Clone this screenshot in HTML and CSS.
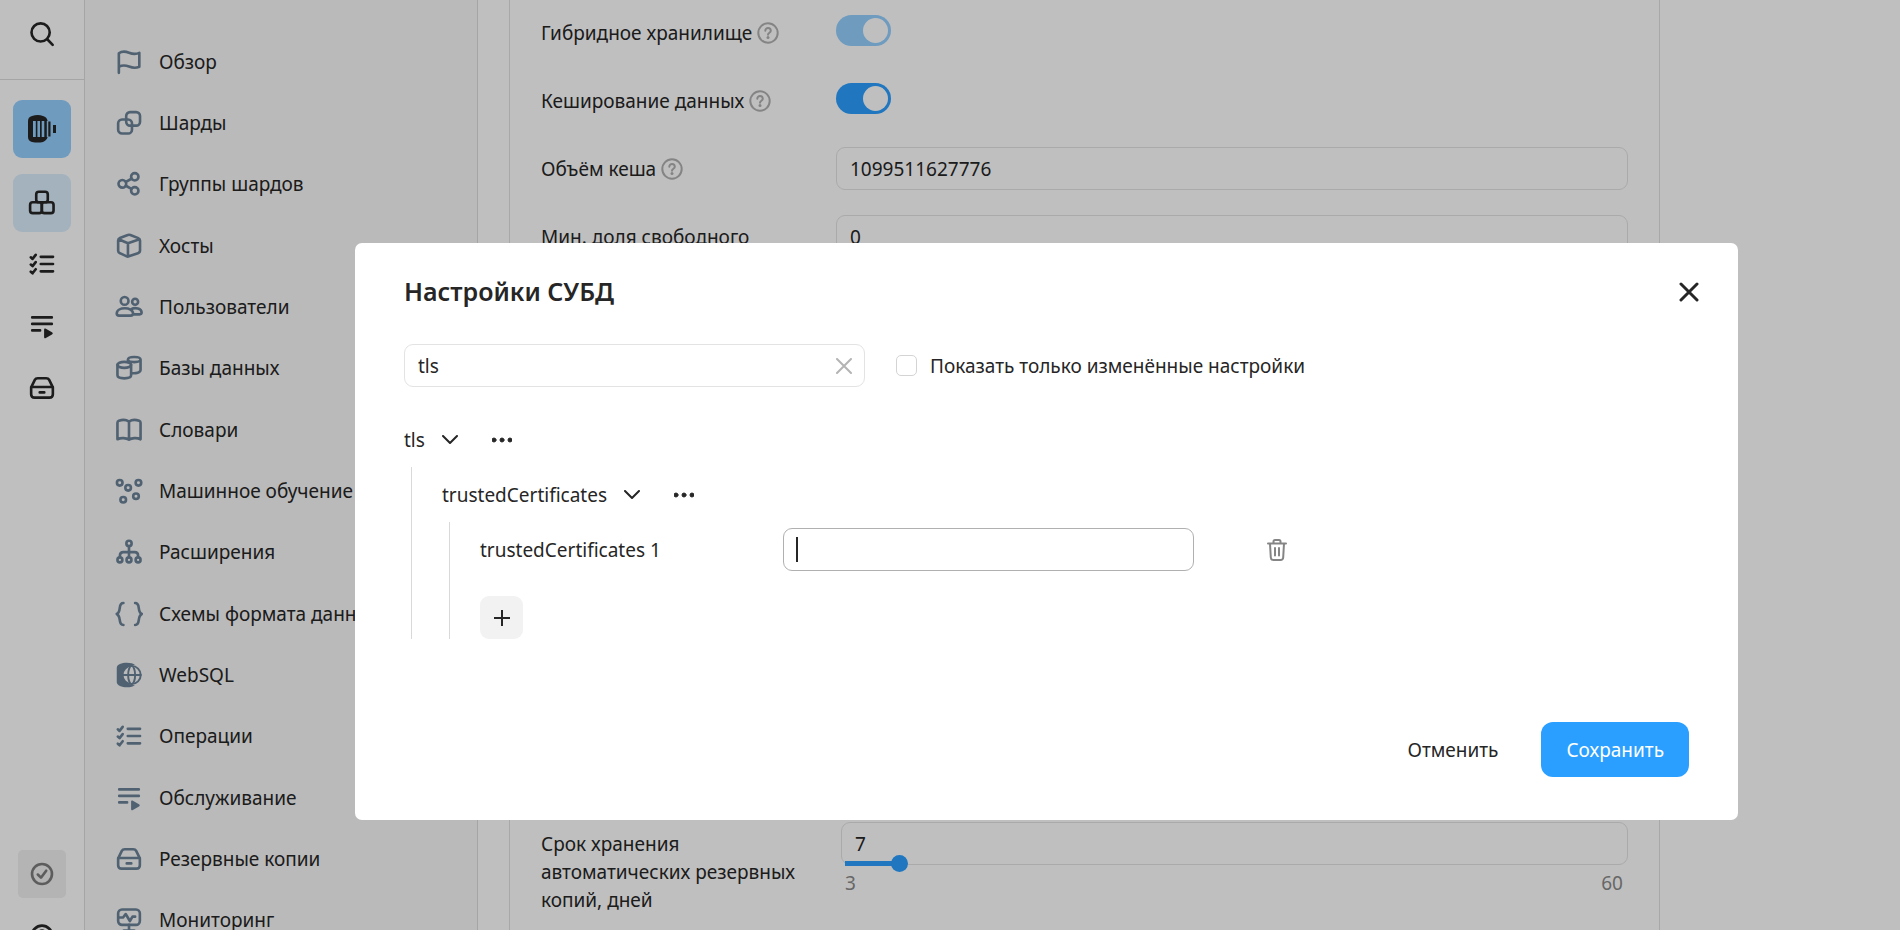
FILE: index.html
```html
<!DOCTYPE html>
<html lang="ru">
<head>
<meta charset="utf-8">
<meta name="viewport" content="width=device-width, initial-scale=1">
<title>Настройки СУБД</title>
<link rel="stylesheet" href="styles.css">
</head>
<body>
<svg class="sprite" aria-hidden="true">
  <symbol id="i-checks" viewBox="0 0 16 16"><path d="M1.6 4.2l1 .9 1.8-2.3M1.6 8.3l1 .9 1.8-2.3M1.6 12.4l1 .9 1.8-2.3M7.3 3.9h7M7.3 8h7M7.3 12.2h7"/></symbol>
  <symbol id="i-listplay" viewBox="0 0 16 16"><path d="M2.4 3.1h11.2M2.4 6.8h11.2M2.4 10.5h4.5"/><path class="solid" d="M9.2 10.1v4.2c0 .7.5.9 1 .6l3.5-2c.6-.4.6-.9 0-1.3l-3.5-2.1c-.5-.3-1-.1-1 .6z"/></symbol>
  <symbol id="i-archive" viewBox="0 0 16 16"><path d="M1.8 7.6 3.9 3.4C4.3 2.6 4.9 2.4 5.6 2.4h4.8c.7 0 1.3.2 1.7 1l2.1 4.2v3.9c0 1.2-.8 2-2 2H3.8c-1.2 0-2-.8-2-2zM1.8 7.4h12.4M6.7 10.5h2.6"/></symbol>
</svg>

<div class="app">
  <aside class="rail" aria-label="Сервисы">
    <div class="rail-top">
      <button class="rail-btn" type="button" aria-label="Поиск"><svg class="icon" viewBox="0 0 16 16"><circle cx="7.2" cy="7.1" r="5.2"/><path d="m11 11 3.1 3.2"/></svg></button>
    </div>
    <div class="rail-list">
      <a class="rail-tile rail-tile-main" href="#" aria-label="ClickHouse"><svg class="brand" viewBox="0 0 28 28"><path d="M0 6Q0 2 4 1Q10-1 15 1Q19 2 19.600 6H5v16h14.600Q19 25 15 27Q10 28 4 27Q0 26 0 22z"/><path d="M7.800 5h1.600v18H7.800zM12 5h1.700v18H12zM16.300 4h2.500v20h-2.500zM20.300 6.500h2.200v15h-2.200zM25 10h3v8h-3z"/></svg></a>
      <a class="rail-tile rail-tile-active" href="#" aria-label="Кластеры"><svg class="icon" viewBox="0 0 16 16"><rect x="4.700" y="1.600" width="6.600" height="6" rx="1.500"/><rect x="1.200" y="7.600" width="6.700" height="6.200" rx="1.500"/><rect x="7.900" y="7.600" width="6.700" height="6.200" rx="1.500"/></svg></a>
      <a class="rail-link" href="#" aria-label="Операции"><svg class="icon"><use href="#i-checks"/></svg></a>
      <a class="rail-link" href="#" aria-label="Обслуживание"><svg class="icon"><use href="#i-listplay"/></svg></a>
      <a class="rail-link" href="#" aria-label="Резервные копии"><svg class="icon"><use href="#i-archive"/></svg></a>
    </div>
    <div class="rail-bottom">
      <button class="rail-status" type="button" aria-label="Статус"><svg class="icon" viewBox="0 0 16 16"><circle cx="8" cy="8" r="5.700"/><path d="m5.600 8.300 1.800 1.800 3-4"/></svg></button>
      <button class="rail-btn" type="button" aria-label="Справка"><svg class="icon" viewBox="0 0 16 16"><circle cx="8" cy="8" r="5.900"/><path d="M6.400 6.500c0-2.200 3.300-2.200 3.300 0 0 1.200-1.700 1.200-1.700 2.400M8 11v.2"/></svg></button>
    </div>
  </aside>

  <nav class="nav" aria-label="Разделы кластера">
    <a class="nav-link" href="#"><svg class="icon" viewBox="0 0 16 16"><path d="M2.200 14.200V3c2.200-1.600 4.300-.9 5.800-.3s3.700 1.100 5.900.1v7.900c-2.200 1-4.400.5-5.900-.1s-3.600-1-5.800.1"/></svg>Обзор</a>
    <a class="nav-link" href="#"><svg class="icon" viewBox="0 0 16 16"><rect x="6.400" y="1.800" width="7.900" height="7.700" rx="2.200"/><rect x="1.800" y="6" width="7.900" height="8" rx="2.200"/></svg>Шарды</a>
    <a class="nav-link" href="#"><svg class="icon" viewBox="0 0 16 16"><circle cx="4.200" cy="7.900" r="2.200"/><circle cx="11.300" cy="3.900" r="2.100"/><circle cx="11.300" cy="11.900" r="2.100"/><path d="m6.200 6.800 3.200-1.800M6.200 9l3.200 1.800"/></svg>Группы шардов</a>
    <a class="nav-link" href="#"><svg class="icon" viewBox="0 0 16 16"><path d="M7.300 1.700 2.800 3.400q-1 .4-1 1.400v5.900q0 1 1 1.400l3.900 1.800q.6.300 1.200 0l5.200-1.800q1.200-.4 1.200-1.500V4.900q0-1-1-1.400L8.800 1.700q-.8-.3-1.500 0zM2.100 4.100l5.300 2.300 6.600-2.300M7.400 6.400v7.400"/></svg>Хосты</a>
    <a class="nav-link" href="#"><svg class="icon" viewBox="0 0 16 16"><circle cx="5.500" cy="4.500" r="2.200"/><circle cx="11.500" cy="5" r="1.700"/><path d="M1 11.700c0-4 9.300-4 9.300 0 0 .8-.5 1.200-1.300 1.200H2.300c-.8 0-1.300-.4-1.300-1.200zM9.300 9.200c2.300-1.200 5.900-.2 5.900 2 0 .6-.4 1-1.100 1h-3.600"/></svg>Пользователи</a>
    <a class="nav-link" href="#"><svg class="icon" viewBox="0 0 16 16"><ellipse cx="5.300" cy="6.200" rx="3.900" ry="1.700"/><path d="M1.400 6.200v6c0 2.300 7.800 2.300 7.800 0v-6M7.400 4.300V3.200c0-2 7.200-2 7.200 0v6c0 1.400-2.600 2-5.100 1.700M7.400 3.200c0 1.900 7.200 1.900 7.200 0"/></svg>Базы данных</a>
    <a class="nav-link" href="#"><svg class="icon" viewBox="0 0 16 16"><path d="M8 3.200C6.600 2.200 4 2.100 2.200 2.700q-.8.300-.8 1.100v9.500c2-1 5-.8 6.600.2 1.600-1 4.600-1.200 6.600-.2V3.800q0-.8-.8-1.100C12 2.100 9.400 2.200 8 3.200zv10"/></svg>Словари</a>
    <a class="nav-link" href="#"><svg class="icon" viewBox="0 0 16 16"><circle cx="2.700" cy="3.300" r="1.600"/><circle cx="13.400" cy="3.300" r="1.600"/><circle cx="7.500" cy="6.200" r="1.600"/><circle cx="12" cy="11" r="1.600"/><circle cx="4.700" cy="13" r="1.600"/></svg>Машинное обучение</a>
    <a class="nav-link" href="#"><svg class="icon" viewBox="0 0 16 16"><circle cx="8" cy="3.100" r="1.500"/><circle cx="2.800" cy="12.500" r="1.400"/><circle cx="8" cy="12.500" r="1.400"/><circle cx="13.200" cy="12.500" r="1.400"/><path d="M8 4.600V11M2.800 11v-.9q0-2 2-2h6.400q2 0 2 2v.9"/></svg>Расширения</a>
    <a class="nav-link" href="#"><svg class="icon" viewBox="0 0 16 16"><path d="M4.800 1.700c-3.400 0-.8 4.700-3.800 6.300 3 1.600.4 6.300 3.800 6.300M11.500 1.700c3.400 0 .8 4.700 3.800 6.300-3 1.600-.4 6.300-3.800 6.300"/></svg>Схемы формата данных</a>
    <a class="nav-link" href="#"><svg class="icon" viewBox="0 0 16 16"><path class="solid" d="M1 4C1 .4 9.700.4 11.400 2.300 7 2.400 4.200 5 4.200 8s2.800 5.700 7.200 5.800C9.700 15.600 1 15.600 1 12z"/><g class="thin"><circle cx="9.500" cy="8" r="5.200"/><ellipse cx="9.500" cy="8" rx="2" ry="5.200"/><path d="M4.300 8h10.400"/></g></svg>WebSQL</a>
    <a class="nav-link" href="#"><svg class="icon"><use href="#i-checks"/></svg>Операции</a>
    <a class="nav-link" href="#"><svg class="icon"><use href="#i-listplay"/></svg>Обслуживание</a>
    <a class="nav-link" href="#"><svg class="icon"><use href="#i-archive"/></svg>Резервные копии</a>
    <a class="nav-link" href="#"><svg class="icon" viewBox="0 0 16 16"><rect x="1.800" y="2" width="12.400" height="8.800" rx="2.200"/><path d="M2 6.600h2.600l1.500-2 2.400 4 1.500-2.500h1.500M8 10.800V14M5 14h6"/></svg>Мониторинг</a>
  </nav>

  <main class="main">
    <div class="card">
      <section class="settings">
        <div class="row">
          <label class="row-label" for="hybrid">Гибридное хранилище <svg class="help" viewBox="0 0 22 22"><circle cx="11" cy="11" r="9.700"/><path d="M8.300 8.800c0-3.800 5.500-3.600 5.500 0 0 2-2.800 2-2.800 4"/><circle class="dot" cx="11" cy="15.500" r="1.500"/></svg></label>
          <input class="switch" id="hybrid" type="checkbox" role="switch" checked disabled>
        </div>
        <div class="row">
          <label class="row-label" for="cache">Кеширование данных <svg class="help" viewBox="0 0 22 22"><circle cx="11" cy="11" r="9.700"/><path d="M8.300 8.800c0-3.800 5.500-3.600 5.500 0 0 2-2.800 2-2.800 4"/><circle class="dot" cx="11" cy="15.500" r="1.500"/></svg></label>
          <input class="switch" id="cache" type="checkbox" role="switch" checked>
        </div>
        <div class="row">
          <label class="row-label" for="cache-size">Объём кеша <svg class="help" viewBox="0 0 22 22"><circle cx="11" cy="11" r="9.700"/><path d="M8.300 8.800c0-3.800 5.500-3.600 5.500 0 0 2-2.800 2-2.800 4"/><circle class="dot" cx="11" cy="15.500" r="1.500"/></svg></label>
          <input class="field" id="cache-size" type="text" value="1099511627776">
        </div>
        <div class="row">
          <label class="row-label" for="free-share">Мин. доля свободного</label>
          <input class="field" id="free-share" type="text" value="0">
        </div>
      </section>
      <section class="backups">
        <div class="row">
          <label class="row-label" for="keep-days">Срок хранения автоматических резервных копий, дней</label>
          <div class="slider">
            <input class="field" id="keep-days" type="text" value="7">
            <input class="range" type="range" min="3" max="60" value="7" aria-label="Срок хранения, дней">
            <div class="range-ends"><span>3</span><span>60</span></div>
          </div>
        </div>
      </section>
    </div>
  </main>
</div>

<div class="overlay">
  <div class="modal" role="dialog" aria-modal="true" aria-labelledby="modal-title">
    <header class="modal-head">
      <h1 class="modal-title" id="modal-title">Настройки СУБД</h1>
      <button class="close" type="button" aria-label="Закрыть"><svg viewBox="0 0 20 20"><path d="m2 2 16 16M18 2 2 18"/></svg></button>
    </header>
    <div class="filters">
      <div class="search">
        <input class="field" type="text" value="tls" aria-label="Поиск настройки">
        <button class="clear" type="button" aria-label="Очистить"><svg viewBox="0 0 16 16"><path d="m1 1 14 14M15 1 1 15"/></svg></button>
      </div>
      <label class="check"><input type="checkbox">Показать только изменённые настройки</label>
    </div>
    <div class="tree">
      <div class="tree-row">
        <button class="expander" type="button" aria-expanded="true">tls<svg viewBox="0 0 16 10"><path d="m1 1 7 7 7-7"/></svg></button>
        <button class="more" type="button" aria-label="Действия с tls"><svg viewBox="0 0 20 6"><circle cx="2" cy="3" r="2"/><circle cx="10" cy="3" r="2"/><circle cx="18" cy="3" r="2"/></svg></button>
      </div>
      <div class="branch">
        <div class="tree-row">
          <button class="expander" type="button" aria-expanded="true">trustedCertificates<svg viewBox="0 0 16 10"><path d="m1 1 7 7 7-7"/></svg></button>
          <button class="more" type="button" aria-label="Действия с trustedCertificates"><svg viewBox="0 0 20 6"><circle cx="2" cy="3" r="2"/><circle cx="10" cy="3" r="2"/><circle cx="18" cy="3" r="2"/></svg></button>
        </div>
        <div class="branch">
          <div class="tree-row">
            <label class="leaf-label" for="cert-1">trustedCertificates 1</label>
            <div class="leaf-field"><input class="field field-focus" id="cert-1" type="text"><span class="caret"></span></div>
            <button class="trash" type="button" aria-label="Удалить"><svg viewBox="0 0 20 24"><path d="M1 5.500h18M6.500 5V3.500Q6.500 2 8 2h4q1.500 0 1.500 1.500V5M3 5.500l.8 14q.2 2.500 2.700 2.500h7q2.500 0 2.700-2.500l.8-14M8 10v7.500M12 10v7.500"/></svg></button>
          </div>
          <button class="add" type="button" aria-label="Добавить"><svg viewBox="0 0 16 16"><path d="M8 0v16M0 8h16"/></svg></button>
        </div>
      </div>
    </div>
    <footer class="modal-foot">
      <button class="btn btn-flat" type="button">Отменить</button>
      <button class="btn btn-action" type="button">Сохранить</button>
    </footer>
  </div>
</div>
</body>
</html>
```
FILE: styles.css
```css
* {
  box-sizing: border-box;
}

:root {
  --text: #262626;
  --line: #e3e3e3;
  --blue: #2b9fff;
}

body {
  margin: 0;
  height: 100vh;
  overflow: hidden;
  background: #fff;
  color: var(--text);
  font: 19px/28px "Noto Sans", "Open Sans", sans-serif;
}

button,
input {
  margin: 0;
  color: inherit;
  font: inherit;
}

button {
  padding: 0;
  border: 0;
  background: none;
}

a {
  color: inherit;
  text-decoration: none;
}

svg {
  display: block;
  flex: none;
  fill: none;
  stroke: currentColor;
  stroke-width: 2;
  stroke-linecap: round;
  stroke-linejoin: round;
}

.sprite {
  position: absolute;
  width: 0;
  height: 0;
}

.icon {
  width: 28px;
  height: 28px;
  stroke-width: 1.5;
}

.solid {
  fill: currentColor;
  stroke: none;
}

.thin {
  stroke-width: 1.1;
}

.app {
  display: flex;
  height: 100vh;
}

/* service rail */
.rail {
  display: flex;
  flex: none;
  flex-direction: column;
  width: 85px;
  border-right: 1px solid #dcdcdc;
}

.rail-top {
  display: flex;
  justify-content: center;
  height: 80px;
  padding-top: 20px;
  border-bottom: 1px solid #dcdcdc;
}

.rail-btn {
  height: 28px;
}

.rail-list {
  display: flex;
  flex-direction: column;
  align-items: center;
  padding-top: 20px;
}

.rail-tile,
.rail-link {
  display: flex;
  align-items: center;
  justify-content: center;
  width: 58px;
  height: 58px;
  border-radius: 9px;
}

.rail-link {
  height: 62px;
}

.rail-tile-main {
  margin-bottom: 16px;
  background: #95cfff;
}

.rail-tile-active {
  margin-bottom: 1px;
  background: #dbeefc;
}

.brand {
  width: 28px;
  height: 28px;
  fill: currentColor;
  stroke: none;
}

.rail-bottom {
  display: flex;
  flex-direction: column;
  align-items: center;
  gap: 24px;
  margin-top: auto;
  margin-bottom: -20px;
}

.rail-status {
  display: flex;
  align-items: center;
  justify-content: center;
  width: 48px;
  height: 48px;
  border-radius: 5px;
  background: #f0f0f0;
  color: #7c7c7c;
}

/* cluster navigation */
.nav {
  display: grid;
  flex: none;
  grid-auto-rows: 61px 61px 62px;
  width: 393px;
  padding-top: 31px;
  overflow: hidden;
  border-right: 1px solid #dcdcdc;
  background: #f8f8f8;
}

.nav-link {
  display: flex;
  align-items: center;
  gap: 16px;
  padding-left: 30px;
  white-space: nowrap;
}

.nav-link .icon {
  color: #6b8298;
}

/* settings form */
.main {
  flex: 1;
  padding: 0 31px;
}

.card {
  max-width: 1151px;
  height: 100%;
  padding: 11px 31px 0;
  overflow: hidden;
  border: solid #e1e1e1;
  border-width: 0 1px;
}

.settings {
  display: flex;
  flex-direction: column;
  gap: 25px;
  min-height: 811px;
}

.row {
  display: grid;
  grid-template-columns: 270px 1fr;
  gap: 25px;
  align-items: start;
}

.row-label {
  padding: 8px 0 7px;
}

.help {
  display: inline-block;
  width: 22px;
  height: 22px;
  color: #b1b1b1;
  vertical-align: -4px;
}

.dot {
  fill: currentColor;
  stroke: none;
}

.switch {
  display: flex;
  justify-content: flex-end;
  width: 55px;
  height: 31px;
  margin-top: 4px;
  padding: 3px;
  border-radius: 16px;
  background: var(--blue);
  appearance: none;
}

.switch::before {
  width: 25px;
  height: 25px;
  border-radius: 50%;
  background: #fff;
  content: "";
}

.switch:disabled {
  background: #95cfff;
}

.field {
  display: block;
  width: 100%;
  height: 43px;
  padding: 0 13px;
  border: 1px solid var(--line);
  border-radius: 9px;
  outline: 0;
  background: #fff;
}

.slider {
  position: relative;
  padding-left: 5px;
}

.range {
  position: absolute;
  top: 33px;
  left: 0;
  width: calc(100% + 3px);
  height: 17px;
  background: linear-gradient(var(--blue), var(--blue)) no-repeat 9px center / 7% 5px;
  appearance: none;
}

.range::-webkit-slider-thumb {
  width: 17px;
  height: 17px;
  border-radius: 50%;
  background: var(--blue);
  appearance: none;
}

.range-ends {
  display: flex;
  justify-content: space-between;
  padding: 4px 5px 0 4px;
  color: #8a8a8a;
}

/* dialog */
.overlay {
  position: fixed;
  inset: 0;
  display: flex;
  align-items: flex-start;
  justify-content: center;
  padding: 243px 162px 0 355px;
  background: rgba(0, 0, 0, 0.25);
}

.modal {
  flex: 1;
  padding: 31px 49px 43px;
  border-radius: 7px;
  background: #fff;
}

.modal-head {
  position: relative;
}

.modal-title {
  margin: 0;
  font-size: 25px;
  font-weight: 600;
  line-height: 35px;
}

.close {
  position: absolute;
  top: 8px;
  right: -10px;
}

.close svg {
  width: 20px;
  height: 20px;
  stroke-width: 3;
}

.filters {
  display: flex;
  align-items: center;
  gap: 31px;
  margin-top: 35px;
}

.search {
  position: relative;
  width: 461px;
}

.clear {
  position: absolute;
  top: 14px;
  right: 13px;
  color: #b4b4b4;
}

.clear svg {
  width: 16px;
  height: 16px;
}

.check {
  display: flex;
  align-items: center;
  gap: 13px;
}

.check input {
  width: 21px;
  height: 21px;
  border: 1px solid #d4d4d4;
  border-radius: 5px;
  appearance: none;
}

.tree {
  margin-top: 25px;
}

.tree-row {
  display: flex;
  align-items: center;
  height: 55px;
}

.expander {
  display: flex;
  align-items: center;
  gap: 17px;
}

.expander svg {
  width: 16px;
  height: 10px;
}

.more {
  margin-left: 34px;
}

.more svg {
  width: 20px;
  height: 6px;
  fill: currentColor;
  stroke-width: 1;
}

.branch {
  margin-left: 7px;
  padding-left: 30px;
  border-left: 1px solid #d9d9d9;
}

.leaf-label {
  width: 303px;
}

.leaf-field {
  position: relative;
  width: 411px;
}

.field-focus {
  border-color: #b0b0b0;
}

.caret {
  position: absolute;
  top: 9px;
  left: 13px;
  width: 2px;
  height: 25px;
  background: var(--text);
}

.trash {
  margin-left: 73px;
  color: #858585;
}

.trash svg {
  width: 20px;
  height: 24px;
}

.add {
  display: flex;
  align-items: center;
  justify-content: center;
  width: 43px;
  height: 43px;
  margin-top: 19px;
  border-radius: 9px;
  background: #f2f2f2;
}

.add svg {
  width: 16px;
  height: 16px;
}

.modal-foot {
  display: flex;
  justify-content: flex-end;
  gap: 18px;
  margin-top: 83px;
}

.btn {
  height: 55px;
  padding: 0 25px;
  border-radius: 12px;
}

.btn-action {
  background: var(--blue);
  color: #fff;
}
```
